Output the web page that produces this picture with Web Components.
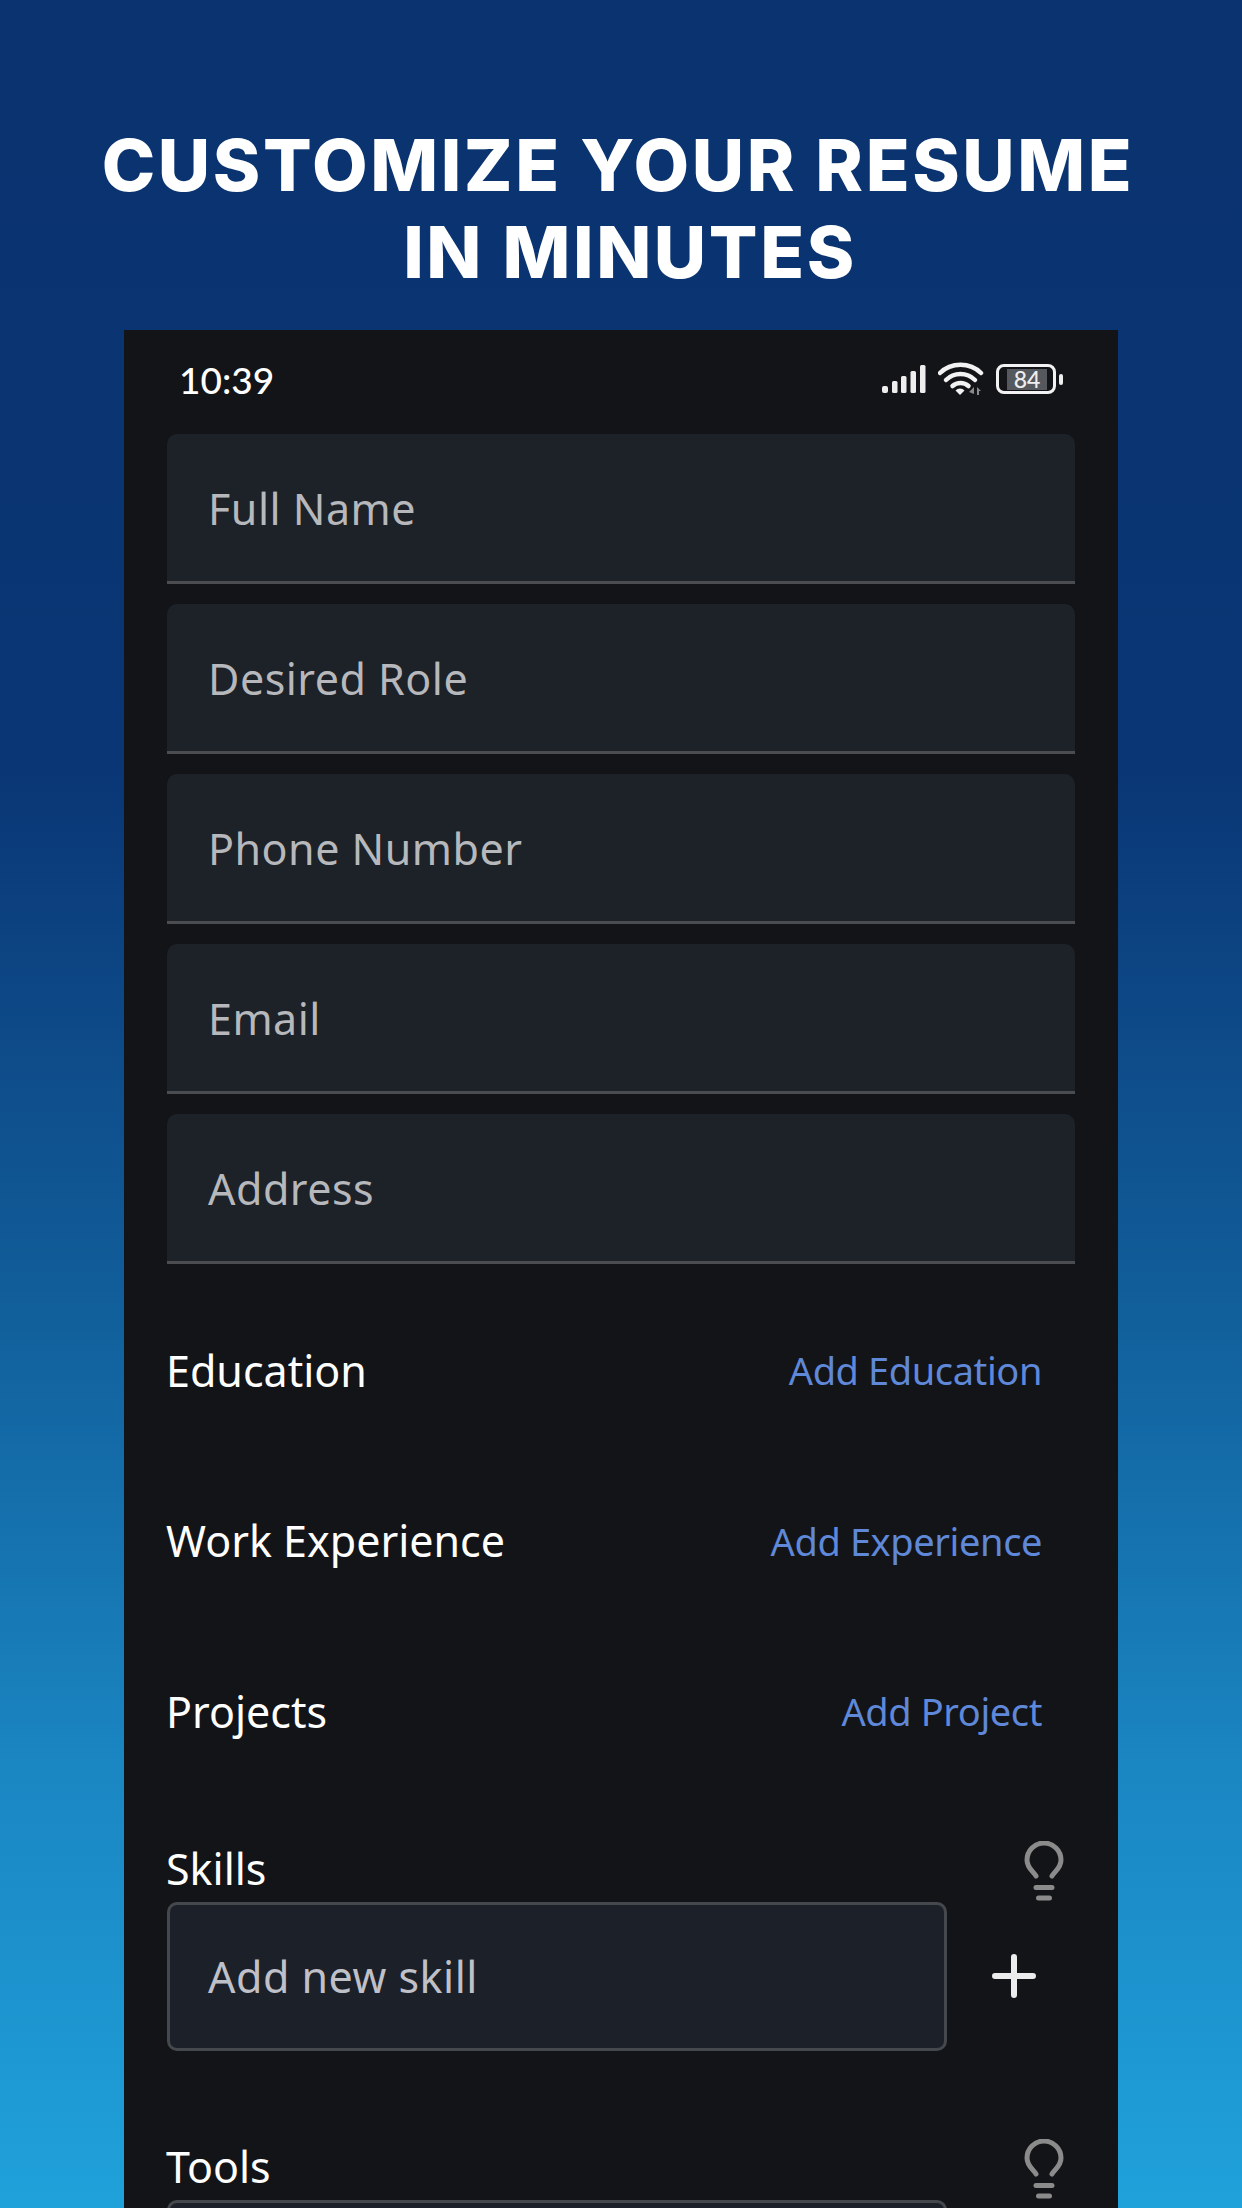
<!DOCTYPE html>
<html><head><meta charset="utf-8">
<style>html,body{margin:0;padding:0;background:#0a2f6b}</style></head>
<body>
<template id="t-poster"><style>
:host{display:flex;flex-direction:column;align-items:center;width:1242px;height:2208px;overflow:hidden;background:linear-gradient(180deg,#0a336f 0%,#0a3675 35%,#11609c 60%,#1a86c2 80%,#1fa1da 100%)}
h1{margin:0;padding:122px 0 0 18px;height:330px;flex:none;box-sizing:border-box;width:100%;font:800 72px/86.5px Inter,sans-serif;letter-spacing:2.6px;color:#fff;text-align:center}
.a,.b{display:block}.a{padding-right:24px}
</style><h1><span class="a"><slot name="l1"></slot></span><span class="b"><slot name="l2"></slot></span></h1><slot></slot></template>

<template id="t-phone"><style>
:host{display:block;width:994px;flex:1;min-height:0;background:#131417;overflow:hidden;font-family:"Noto Sans",sans-serif}
.c{padding:0 43px;display:flex;flex-direction:column}
</style><slot name="status"></slot><div class="c"><slot></slot></div></template>

<template id="t-status"><style>
:host{display:flex;align-items:center;justify-content:space-between;height:104px;padding:0 55px 6px 55px;box-sizing:border-box;color:#fff}
.t{font:500 37px/1 Lato,sans-serif}
.i{display:flex;align-items:center;gap:12px}
.bat{display:flex;align-items:center;justify-content:center;box-sizing:border-box;width:60px;height:30px;border:3.5px solid #f2f2f2;border-radius:8px;font:500 23px/1 Lato,sans-serif;color:#eee}
.f{display:flex;align-items:center;justify-content:center;width:40px;height:21px;margin-left:2px;background:#55585c}
.w{display:flex;align-items:center;gap:3px}.n{width:4px;height:11px;background:#eee;border-radius:2px}
</style><span class="t"><slot></slot></span><span class="i">
<svg width="44" height="28" viewBox="0 0 44 28" fill="#eee"><rect x="0" y="21" width="6" height="7" rx="2"/><rect x="10" y="16" width="5.5" height="12" rx="1.5"/><rect x="19" y="11" width="5.5" height="17" rx="1.5"/><rect x="28.500" y="6" width="5.500" height="22" rx="1.500"/><rect x="38" y="0" width="5.500" height="28" rx="1.500"/></svg>
<svg width="46" height="34" viewBox="0 0 46 34" fill="none" stroke="#f2f2f2" stroke-width="4.500" stroke-linecap="round"><path d="M2 11C13 0 32 0 43 11"/><path d="M8 18C16 10 29 10 37 18"/><path d="M14.500 24C19 20 26 20 30.500 24"/><path d="M22 33l-4.500-4.500a6 6 0 0 1 9 0z" fill="#f2f2f2" stroke="none"/><path d="M36 32v-7l-5 5zM39 33v-8l4 4h-2v4z" fill="#8a8a8a" stroke="none"/></svg>
<span class="w"><span class="bat"><span class="f">84</span></span><span class="n"></span></span>
</span></template>

<template id="t-field"><style>
:host{display:flex;align-items:center;box-sizing:border-box;height:150px;margin-bottom:20px;padding:2px 41px 0;background:#1d2128;border-bottom:3px solid #4b4d50;border-radius:10px 10px 0 0;color:#b6b8bb;font-size:43px;letter-spacing:.5px}
:host(:last-of-type){margin-bottom:22px}
</style><slot></slot></template>

<template id="t-row"><style>
:host{display:flex;align-items:center;justify-content:space-between;height:170.500px;padding:0 33px 2px 0;box-sizing:border-box;color:#fff;font-size:43px}
span{margin-left:-1px}
a{color:#5f88d9;font-size:38px;letter-spacing:-.4px}
</style><span><slot></slot></span><a><slot name="action"></slot></a></template>

<template id="t-bulb"><style>:host{display:block;width:40px;height:60px}svg{display:block}</style>
<svg width="40" height="60" viewBox="0 0 40 60" fill="none" stroke="#8b8b8b" stroke-width="5" stroke-linecap="round"><path d="M12 35C9 30 3 27 3 19A17 17 0 0 1 37 19C37 27 31 30 28 35"/><path d="M12 46.500H28M14.500 57H25.500"/></svg></template>

<template id="t-group"><style>
:host{display:block;height:298px;color:#fff;font-size:43px}
.h{display:flex;align-items:flex-end;justify-content:space-between;height:104px;padding-right:11px;padding-bottom:1px;box-sizing:border-box;padding-top:37px;line-height:50px}
.h span{margin:0 0 7px -1px}
.r{display:flex;align-items:center}
.in{display:flex;align-items:center;box-sizing:border-box;width:780px;height:149px;padding:0 38px;background:#1c2129;border:3px solid #45484c;border-radius:10px;color:#c0c0c8;letter-spacing:.5px}
svg{margin-left:45px}
</style><div class="h"><span><slot></slot></span><slot name="hint"></slot></div>
<div class="r"><div class="in"><slot name="ph"></slot></div>
<svg width="44" height="44" viewBox="0 0 44 44" stroke="#ececec" stroke-width="6" stroke-linecap="round"><path d="M22 3V41M3 22H41"/></svg></div></template>

<script>
for (const [tag,id] of [['resume-poster','t-poster'],['phone-frame','t-phone'],['status-bar','t-status'],['text-field','t-field'],['add-row','t-row'],['hint-bulb','t-bulb'],['skill-group','t-group']]) {
  customElements.define(tag, class extends HTMLElement {
    constructor(){super();this.attachShadow({mode:'open'}).appendChild(document.getElementById(id).content.cloneNode(true));}
  });
}
</script>

<resume-poster>
<span slot="l1">CUSTOMIZE YOUR RESUME</span><span slot="l2">IN MINUTES</span>
<phone-frame>
<status-bar slot="status">10:39</status-bar>
<text-field>Full Name</text-field>
<text-field>Desired Role</text-field>
<text-field>Phone Number</text-field>
<text-field>Email</text-field>
<text-field>Address</text-field>
<add-row>Education<span slot="action">Add Education</span></add-row>
<add-row>Work Experience<span slot="action">Add Experience</span></add-row>
<add-row>Projects<span slot="action">Add Project</span></add-row>
<skill-group>Skills<hint-bulb slot="hint"></hint-bulb><span slot="ph">Add new skill</span></skill-group>
<skill-group>Tools<hint-bulb slot="hint"></hint-bulb><span slot="ph"></span></skill-group>
</phone-frame>
</resume-poster>
</body></html>
